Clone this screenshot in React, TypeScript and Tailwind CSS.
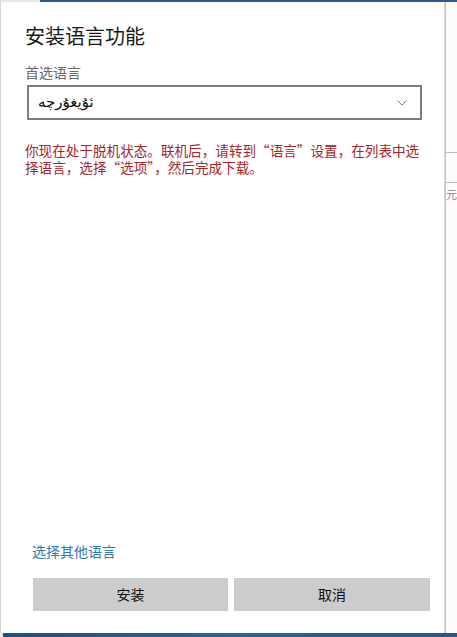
import { ChevronDown } from 'lucide-react'

const cjk = { fontFamily: '"Noto Sans CJK SC", "Microsoft YaHei", sans-serif' }

const LanguageSelect = () => (
  <div className="mt-[3px] mr-[22px] ml-[2px] flex h-[35px] items-center justify-between border-2 border-[#7d7d7d] bg-white pr-[10px] pl-[9px]">
    <span
      className="text-[15px] leading-none text-[#111]"
      style={{ fontFamily: '"DejaVu Sans", sans-serif' }}
    >
      ئۇيغۇرچە
    </span>
    <ChevronDown className="h-[16px] w-[16px] text-[#555]" strokeWidth={1.2} />
  </div>
)

const InstallDialog = () => (
  <div
    className="flex w-[447px] flex-col border-r border-l border-[#d4d4d4] bg-white pt-[20px] pl-[24px]"
    style={cjk}
  >
    <h1 className="text-[20px] leading-[28px] font-normal text-[#1a1a1a]">安装语言功能</h1>
    <p className="mt-[12px] text-[14px] leading-[20px] text-[#6b6b6b]">首选语言</p>
    <LanguageSelect />
    <p className="mt-[22px] w-[400px] text-[13.6px] leading-[17px] text-[#a4262c]">
      你现在处于脱机状态。联机后，请转到“语言”设置，在列表中选择语言，选择“选项”，然后完成下载。
    </p>
    <div className="flex-1" />
    <a className="ml-[7px] text-[14px] leading-[20px] text-[#2b7bb5]">选择其他语言</a>
    <div className="mt-[17px] mb-[22px] ml-[8px] flex gap-[6px]">
      <button className="h-[33px] w-[195px] bg-[#cccccc] text-[14px] text-[#111]">安装</button>
      <button className="h-[33px] w-[196px] bg-[#cccccc] text-[14px] text-[#111]">取消</button>
    </div>
  </div>
)

export default function App() {
  return (
    <div className="flex h-[637px] w-[457px] flex-col overflow-hidden bg-[#fbfbfb]">
      <div className="flex h-[2px]">
        <div className="w-[40px] bg-[#e3e8ee]" />
        <div className="flex-1 bg-[#2d5b8c]" />
      </div>
      <div className="flex flex-1">
        <InstallDialog />
        {/* edge of the settings window behind the dialog */}
        <div className="flex flex-1 flex-col border-l border-[#c6c6c6]">
          <div className="h-[150px]" />
          <div className="h-px bg-[#bdbdbd]" />
          <div className="h-[29px]" />
          <div className="h-px bg-[#bdbdbd]" />
          <div className="mt-[4px] text-[11px] leading-[14px] text-[#888]" style={cjk}>
            元
          </div>
        </div>
      </div>
      <div className="flex h-[4px]">
        <div className="w-[3px] bg-[#e6e6e6]" />
        <div className="flex-1 bg-gradient-to-r from-[#1d4f86] via-[#2465a3] to-[#1f5a95]" />
      </div>
    </div>
  )
}
